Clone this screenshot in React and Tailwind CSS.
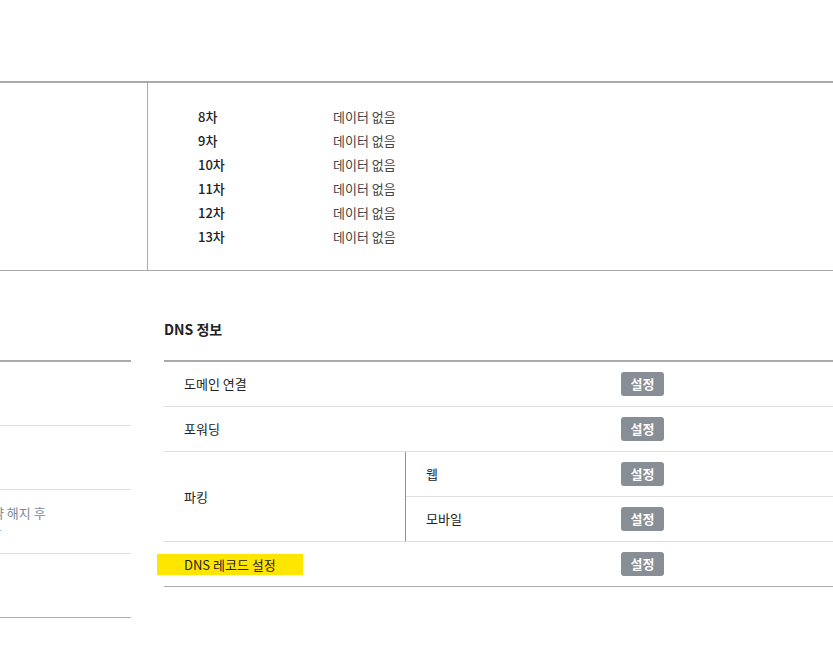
import React from "react";

const rounds = ["8차", "9차", "10차", "11차", "12차", "13차"];

function SetBtn() {
  return (
    <button className="w-[43px] h-[24px] rounded-[3px] bg-[#878e95] text-white text-[13px] font-bold leading-[24px]">
      설정
    </button>
  );
}

export default function App() {
  return (
    <div
      className="w-[833px] h-[663px] overflow-hidden bg-white text-[13px] text-[#222]"
      style={{ fontFamily: '"Noto Sans CJK KR", "Noto Sans", sans-serif' }}
    >
      <div className="h-[81px]" />

      {/* round history */}
      <div className="flex border-t-2 border-b border-[#aaa]">
        <div className="w-[148px] border-r border-[#aaa]" />
        <div className="pl-[50px] pt-[22px] pb-[21px]">
          {rounds.map((r) => (
            <div key={r} className="flex h-[24px] items-center">
              <span className="w-[135px] font-medium text-[#222]">{r}</span>
              <span className="text-[#444]">데이터 없음</span>
            </div>
          ))}
        </div>
      </div>

      <div className="flex gap-[33px] mt-[48px]">
        {/* left table (cut off) */}
        <div className="w-[131px] shrink-0 mt-[41px] overflow-hidden">
          <div className="border-t-2 border-[#aaa]">
            <div className="h-[64px] border-b border-[#e0e0e0]" />
            <div className="h-[64px] border-b border-[#e0e0e0]" />
            <div className="h-[64px] border-b border-[#e0e0e0] flex flex-col justify-center whitespace-nowrap text-[#7d8a96] leading-[18px]">
              <span className="-ml-[20px]">계약 해지 후</span>
              <span className="-ml-[11px]">나</span>
            </div>
            <div className="h-[64px] border-b border-[#b0b0b0]" />
          </div>
        </div>

        {/* DNS info */}
        <div className="flex-1">
          <h3 className="text-[14px] font-bold leading-[20px] text-[#222] mb-[21px]">DNS 정보</h3>
          <div className="grid grid-cols-[242px_215px_1fr] border-t-2 border-[#aaa] border-b border-b-[#aaa]">
            <div className="col-span-2 h-[45px] border-b border-[#e0e0e0] flex items-center pl-[20px]">도메인 연결</div>
            <div className="h-[45px] border-b border-[#e0e0e0] flex items-center"><SetBtn /></div>

            <div className="col-span-2 h-[45px] border-b border-[#e0e0e0] flex items-center pl-[20px]">포워딩</div>
            <div className="h-[45px] border-b border-[#e0e0e0] flex items-center"><SetBtn /></div>

            <div className="row-span-2 border-b border-[#e0e0e0] border-r border-r-[#8a929a] flex items-center pl-[20px]">파킹</div>
            <div className="h-[45px] border-b border-[#e0e0e0] flex items-center pl-[20px]">웹</div>
            <div className="h-[45px] border-b border-[#e0e0e0] flex items-center"><SetBtn /></div>
            <div className="h-[45px] border-b border-[#e0e0e0] flex items-center pl-[20px]">모바일</div>
            <div className="h-[45px] border-b border-[#e0e0e0] flex items-center"><SetBtn /></div>

            <div className="col-span-2 h-[44px] flex items-center">
              <span className="-ml-[7px] w-[146px] h-[21px] pl-[27px] bg-[#ffe600] leading-[21px]">DNS 레코드 설정</span>
            </div>
            <div className="h-[44px] flex items-center"><SetBtn /></div>
          </div>
        </div>
      </div>
    </div>
  );
}
